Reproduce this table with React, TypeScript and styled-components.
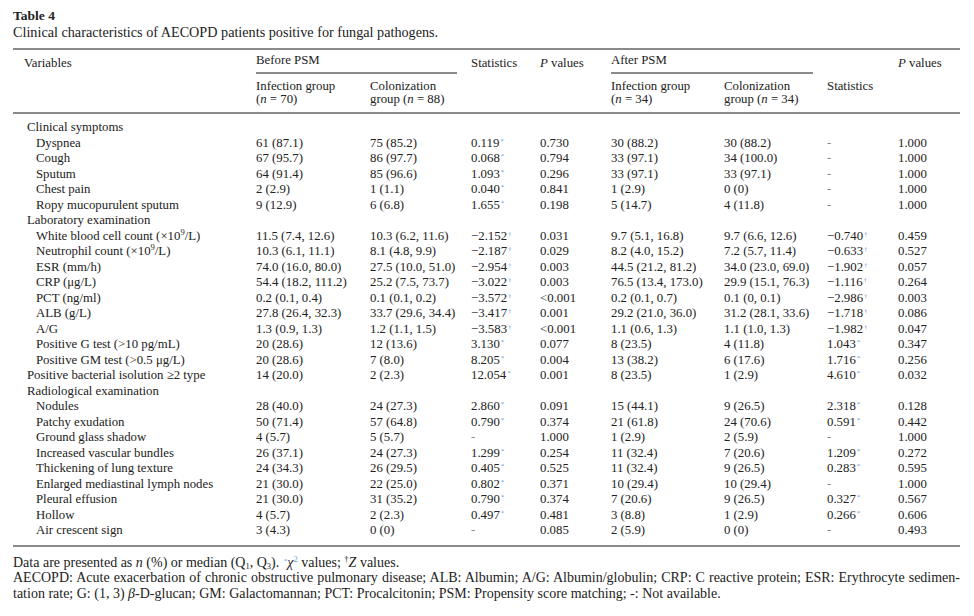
import React from 'react';
import styled, { createGlobalStyle } from 'styled-components';

const GlobalStyle = createGlobalStyle`
  html, body {
    margin: 0;
    padding: 0;
    background: #fff;
  }
  body {
    font-family: 'Liberation Serif', 'Times New Roman', serif;
    color: #222;
  }
`;

const ruleColor = '#8a8a8a';
const markColor = '#6b9dd0';

const Page = styled.div`
  width: 974px;
  padding: 8px 14px 0 13px;
  box-sizing: border-box;
`;

const Title = styled.div`
  font-size: 13.5px;
  line-height: 16px;
  font-weight: 700;
`;

const Caption = styled.div`
  font-size: 14.2px;
  line-height: 16px;
  margin-bottom: 8px;
`;

const Table = styled.table`
  width: 947px;
  border-collapse: collapse;
  table-layout: fixed;
  font-size: 12.8px;
  border-top: 2px solid ${ruleColor};
  border-bottom: 2px solid ${ruleColor};
`;

const HeadRow = styled.tr<{ $last?: boolean }>`
  border-bottom: ${(p) => (p.$last ? `2px solid ${ruleColor}` : 'none')};
`;

const HeadCell = styled.th<{ $pad?: number; $top?: number; $bottom?: number }>`
  font-weight: 400;
  text-align: left;
  vertical-align: top;
  padding: ${(p) => p.$top ?? 5}px 0 ${(p) => p.$bottom ?? 0}px ${(p) => p.$pad ?? 0}px;
  line-height: 13px;
`;

const GroupCell = styled.th`
  font-weight: 400;
  text-align: left;
  vertical-align: bottom;
  padding: 0;
  height: 24px;
`;

const GroupLabel = styled.div`
  line-height: 13px;
  padding-bottom: 5px;
  margin-right: 14px;
  border-bottom: 2px solid ${ruleColor};
`;

const BodyRow = styled.tr<{ $first?: boolean; $last?: boolean }>`
  td {
    padding-top: ${(p) => (p.$first ? 6 : 0)}px;
    padding-bottom: ${(p) => (p.$last ? 6 : 0)}px;
  }
`;

const Cell = styled.td<{ $indent?: number }>`
  padding: 0 0 0 ${(p) => p.$indent ?? 0}px;
  line-height: 15.5px;
  white-space: nowrap;
  vertical-align: top;
`;

const Mark = styled.sup`
  font-size: 7px;
  color: ${markColor};
  vertical-align: 4px;
  line-height: 0;
  margin-left: 1px;
`;

const Nil = styled.span`
  color: #888;
`;

const Notes = styled.div`
  font-size: 14px;
  line-height: 15.5px;
  margin-top: 8px;
  width: 947px;
`;

const JustifiedLine = styled.div`
  text-align: justify;
  text-align-last: justify;
`;

const Up = styled.sup`
  font-size: 8.5px;
  vertical-align: 5px;
  line-height: 0;
`;

const Down = styled.sub`
  font-size: 8.5px;
  vertical-align: -2px;
  line-height: 0;
`;

type Row =
  | { kind: 'group'; label: React.ReactNode; level: 'cat' }
  | {
      kind: 'data';
      label: React.ReactNode;
      level: 'cat' | 'item';
      v: string[];
    };

const rows: Row[] = [
  { kind: 'group', label: 'Clinical symptoms', level: 'cat' },
  { kind: 'data', level: 'item', label: 'Dyspnea', v: ['61 (87.1)', '75 (85.2)', '0.119*', '0.730', '30 (88.2)', '30 (88.2)', '-', '1.000'] },
  { kind: 'data', level: 'item', label: 'Cough', v: ['67 (95.7)', '86 (97.7)', '0.068*', '0.794', '33 (97.1)', '34 (100.0)', '-', '1.000'] },
  { kind: 'data', level: 'item', label: 'Sputum', v: ['64 (91.4)', '85 (96.6)', '1.093*', '0.296', '33 (97.1)', '33 (97.1)', '-', '1.000'] },
  { kind: 'data', level: 'item', label: 'Chest pain', v: ['2 (2.9)', '1 (1.1)', '0.040*', '0.841', '1 (2.9)', '0 (0)', '-', '1.000'] },
  { kind: 'data', level: 'item', label: 'Ropy mucopurulent sputum', v: ['9 (12.9)', '6 (6.8)', '1.655*', '0.198', '5 (14.7)', '4 (11.8)', '-', '1.000'] },
  { kind: 'group', label: 'Laboratory examination', level: 'cat' },
  { kind: 'data', level: 'item', label: <>White blood cell count (×10<Up>9</Up>/L)</>, v: ['11.5 (7.4, 12.6)', '10.3 (6.2, 11.6)', '−2.152†', '0.031', '9.7 (5.1, 16.8)', '9.7 (6.6, 12.6)', '−0.740†', '0.459'] },
  { kind: 'data', level: 'item', label: <>Neutrophil count (×10<Up>9</Up>/L)</>, v: ['10.3 (6.1, 11.1)', '8.1 (4.8, 9.9)', '−2.187†', '0.029', '8.2 (4.0, 15.2)', '7.2 (5.7, 11.4)', '−0.633†', '0.527'] },
  { kind: 'data', level: 'item', label: 'ESR (mm/h)', v: ['74.0 (16.0, 80.0)', '27.5 (10.0, 51.0)', '−2.954†', '0.003', '44.5 (21.2, 81.2)', '34.0 (23.0, 69.0)', '−1.902†', '0.057'] },
  { kind: 'data', level: 'item', label: 'CRP (μg/L)', v: ['54.4 (18.2, 111.2)', '25.2 (7.5, 73.7)', '−3.022†', '0.003', '76.5 (13.4, 173.0)', '29.9 (15.1, 76.3)', '−1.116†', '0.264'] },
  { kind: 'data', level: 'item', label: 'PCT (ng/ml)', v: ['0.2 (0.1, 0.4)', '0.1 (0.1, 0.2)', '−3.572†', '<0.001', '0.2 (0.1, 0.7)', '0.1 (0, 0.1)', '−2.986†', '0.003'] },
  { kind: 'data', level: 'item', label: 'ALB (g/L)', v: ['27.8 (26.4, 32.3)', '33.7 (29.6, 34.4)', '−3.417†', '0.001', '29.2 (21.0, 36.0)', '31.2 (28.1, 33.6)', '−1.718†', '0.086'] },
  { kind: 'data', level: 'item', label: 'A/G', v: ['1.3 (0.9, 1.3)', '1.2 (1.1, 1.5)', '−3.583†', '<0.001', '1.1 (0.6, 1.3)', '1.1 (1.0, 1.3)', '−1.982†', '0.047'] },
  { kind: 'data', level: 'item', label: 'Positive G test (>10 pg/mL)', v: ['20 (28.6)', '12 (13.6)', '3.130*', '0.077', '8 (23.5)', '4 (11.8)', '1.043*', '0.347'] },
  { kind: 'data', level: 'item', label: 'Positive GM test (>0.5 μg/L)', v: ['20 (28.6)', '7 (8.0)', '8.205*', '0.004', '13 (38.2)', '6 (17.6)', '1.716*', '0.256'] },
  { kind: 'data', level: 'cat', label: 'Positive bacterial isolution ≥2 type', v: ['14 (20.0)', '2 (2.3)', '12.054*', '0.001', '8 (23.5)', '1 (2.9)', '4.610*', '0.032'] },
  { kind: 'group', label: 'Radiological examination', level: 'cat' },
  { kind: 'data', level: 'item', label: 'Nodules', v: ['28 (40.0)', '24 (27.3)', '2.860*', '0.091', '15 (44.1)', '9 (26.5)', '2.318*', '0.128'] },
  { kind: 'data', level: 'item', label: 'Patchy exudation', v: ['50 (71.4)', '57 (64.8)', '0.790*', '0.374', '21 (61.8)', '24 (70.6)', '0.591*', '0.442'] },
  { kind: 'data', level: 'item', label: 'Ground glass shadow', v: ['4 (5.7)', '5 (5.7)', '-', '1.000', '1 (2.9)', '2 (5.9)', '-', '1.000'] },
  { kind: 'data', level: 'item', label: 'Increased vascular bundles', v: ['26 (37.1)', '24 (27.3)', '1.299*', '0.254', '11 (32.4)', '7 (20.6)', '1.209*', '0.272'] },
  { kind: 'data', level: 'item', label: 'Thickening of lung texture', v: ['24 (34.3)', '26 (29.5)', '0.405*', '0.525', '11 (32.4)', '9 (26.5)', '0.283*', '0.595'] },
  { kind: 'data', level: 'item', label: 'Enlarged mediastinal lymph nodes', v: ['21 (30.0)', '22 (25.0)', '0.802*', '0.371', '10 (29.4)', '10 (29.4)', '-', '1.000'] },
  { kind: 'data', level: 'item', label: 'Pleural effusion', v: ['21 (30.0)', '31 (35.2)', '0.790*', '0.374', '7 (20.6)', '9 (26.5)', '0.327*', '0.567'] },
  { kind: 'data', level: 'item', label: 'Hollow', v: ['4 (5.7)', '2 (2.3)', '0.497*', '0.481', '3 (8.8)', '1 (2.9)', '0.266*', '0.606'] },
  { kind: 'data', level: 'item', label: 'Air crescent sign', v: ['3 (4.3)', '0 (0)', '-', '0.085', '2 (5.9)', '0 (0)', '-', '0.493'] },
];

const widths = [243, 114, 101, 69, 71, 113, 103, 71, 62];
const indent = { cat: 14, item: 23 };

// values end with * (chi-square) or † (Z) marker, '-' means not available
const Value = ({ text }: { text: string }) => {
  if (text === '-') return <Nil>-</Nil>;
  const last = text.slice(-1);
  if (last === '*' || last === '†') {
    return (
      <>
        {text.slice(0, -1)}
        <Mark>{last}</Mark>
      </>
    );
  }
  return <>{text}</>;
};

const App = () => (
  <Page>
    <GlobalStyle />
    <Title>Table 4</Title>
    <Caption>Clinical characteristics of AECOPD patients positive for fungal pathogens.</Caption>
    <Table>
      <colgroup>
        {widths.map((w, i) => (
          <col key={i} style={{ width: w }} />
        ))}
      </colgroup>
      <thead>
        <HeadRow>
          <HeadCell rowSpan={2} $pad={11} $top={7}>
            Variables
          </HeadCell>
          <GroupCell colSpan={2}>
            <GroupLabel>Before PSM</GroupLabel>
          </GroupCell>
          <HeadCell rowSpan={2} $top={7}>
            Statistics
          </HeadCell>
          <HeadCell rowSpan={2} $top={7}>
            <i>P</i> values
          </HeadCell>
          <GroupCell colSpan={2}>
            <GroupLabel>After PSM</GroupLabel>
          </GroupCell>
          <HeadCell />
          <HeadCell rowSpan={2} $top={7}>
            <i>P</i> values
          </HeadCell>
        </HeadRow>
        <HeadRow $last>
          <HeadCell $top={6} $bottom={6}>
            Infection group
            <br />(<i>n</i> = 70)
          </HeadCell>
          <HeadCell $top={6} $bottom={6}>
            Colonization
            <br />
            group (<i>n</i> = 88)
          </HeadCell>
          <HeadCell $top={6} $bottom={6}>
            Infection group
            <br />(<i>n</i> = 34)
          </HeadCell>
          <HeadCell $top={6} $bottom={6}>
            Colonization
            <br />
            group (<i>n</i> = 34)
          </HeadCell>
          <HeadCell $top={6} $bottom={6}>
            Statistics
          </HeadCell>
        </HeadRow>
      </thead>
      <tbody>
        {rows.map((r, i) => (
          <BodyRow key={i} $first={i === 0} $last={i === rows.length - 1}>
            <Cell $indent={indent[r.level]} colSpan={r.kind === 'group' ? 9 : 1}>
              {r.label}
            </Cell>
            {r.kind === 'data' &&
              r.v.map((t, j) => (
                <Cell key={j}>
                  <Value text={t} />
                </Cell>
              ))}
          </BodyRow>
        ))}
      </tbody>
    </Table>
    <Notes>
      <div>
        Data are presented as <i>n</i> (%) or median (Q<Down>1</Down>, Q<Down>3</Down>).{' '}
        <Mark>*</Mark>
        <i>χ</i>
        <Up style={{ color: markColor }}>2</Up> values; <Up>†</Up>
        <i>Z</i> values.
      </div>
      <JustifiedLine>
        AECOPD: Acute exacerbation of chronic obstructive pulmonary disease; ALB: Albumin; A/G:
        Albumin/globulin; CRP: C reactive protein; ESR: Erythrocyte sedimen-
      </JustifiedLine>
      <div>
        tation rate; G: (1, 3) <i>β</i>-D-glucan; GM: Galactomannan; PCT: Procalcitonin; PSM:
        Propensity score matching; -: Not available.
      </div>
    </Notes>
  </Page>
);

export default App;
